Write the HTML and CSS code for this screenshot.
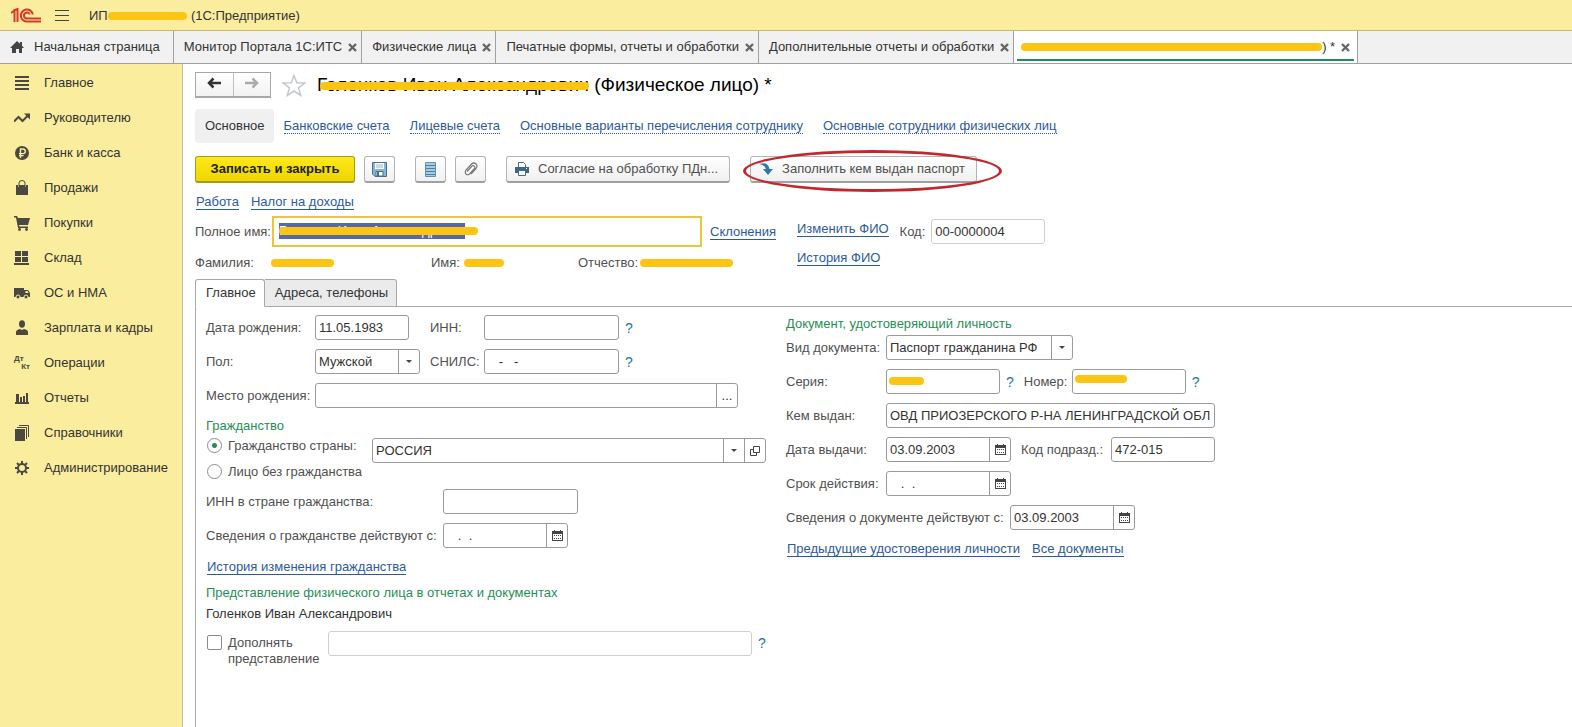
FILE: index.html
```html
<!DOCTYPE html>
<html lang="ru">
<head>
<meta charset="UTF-8">
<meta name="viewport" content="width=device-width, initial-scale=1.0">
<title>Физическое лицо (1С:Предприятие)</title>
<link rel="stylesheet" href="styles.css">
</head>
<body>

<!-- общие значки -->
<svg class="sprite" aria-hidden="true">
  <symbol id="i-cal" viewBox="0 0 11 11">
    <path d="M0 1h2V0h1v1h5V0h1v1h2v10H0z" fill="#444"/>
    <path d="M1 4h9v6H1z" fill="#fff"/>
    <path d="M2 5h1v1H2zM4 5h1v1H4zM6 5h1v1H6zM8 5h1v1H8zM2 8h1v1H2zM4 8h1v1H4zM6 8h1v1H6zM8 8h1v1H8z" fill="#444"/>
  </symbol>
  <symbol id="i-close" viewBox="0 0 9 9">
    <path d="M1 1l7 7M8 1L1 8" stroke="#666" stroke-width="2.4" fill="none"/>
  </symbol>
</svg>

<header class="topbar">
  <svg class="logo" width="31" height="16" viewBox="0 0 31 16" fill="none" stroke="#d8382c">
    <path d="M0 5L3.500 2.500V14M2.500 2.500L6.500 1V14" stroke-width="2"/>
    <path d="M21.800 6.500A6 6 0 1 0 16.500 13.500H30" stroke-width="2"/>
    <path d="M18.800 6.500A3 3 0 1 0 16.500 10.500H30" stroke-width="2"/>
  </svg>
  <button class="burger" aria-label="Меню"><span></span><span></span><span></span></button>
  <span class="app-name">ИП <span class="marker marker-org"></span> (1С:Предприятие)</span>
</header>

<nav class="tabs">
  <a href="#" class="tab tab-home">
    <svg width="16" height="14" viewBox="0 0 16 14"><path d="M8 1l3 2.800V2h2v3.700L15 8h-2v5h-3V9H7v4H3V8H1z" fill="#444"/></svg>
    Начальная страница
  </a>
  <a href="#" class="tab">Монитор Портала 1С:ИТС <svg width="9" height="9"><use href="#i-close"/></svg></a>
  <a href="#" class="tab">Физические лица <svg width="9" height="9"><use href="#i-close"/></svg></a>
  <a href="#" class="tab">Печатные формы, отчеты и обработки <svg width="9" height="9"><use href="#i-close"/></svg></a>
  <a href="#" class="tab">Дополнительные отчеты и обработки <svg width="9" height="9"><use href="#i-close"/></svg></a>
  <a href="#" class="tab active"><span class="marker marker-tab"></span><span>) *</span> <svg width="9" height="9"><use href="#i-close"/></svg></a>
</nav>

<div class="layout">
  <aside class="sidebar">
    <a href="#"><svg width="16" height="16" viewBox="0 0 16 16" fill="#4a4840"><path d="M1 1h14v2H1zM1 5h14v2H1zM1 9h14v2H1zM1 13h14v2H1z"/></svg>Главное</a>
    <a href="#"><svg width="16" height="16" viewBox="0 0 16 16" fill="none" stroke="#4a4840" stroke-width="2"><path d="M0 11.500l4.500-4.500 4 4L14 5.500"/><path d="M10 3.500h6V9.500z" fill="#4a4840" stroke="none"/></svg>Руководителю</a>
    <a href="#"><svg width="16" height="16" viewBox="0 0 16 16"><circle cx="8" cy="8" r="7" fill="#4a4840"/><path d="M6.500 13V4h2.500a2.300 2.300 0 0 1 0 4.600H5M5 10.600h4.500" stroke="#fbed9e" stroke-width="1.400" fill="none"/></svg>Банк и касса</a>
    <a href="#"><svg width="16" height="16" viewBox="0 0 16 16"><path d="M2 5h2v2h1V5h6v2h1V5h2v10H2z" fill="#4a4840"/><path d="M5 7V3a3 2.500 0 0 1 6 0v4" stroke="#4a4840" fill="none"/></svg>Продажи</a>
    <a href="#"><svg width="16" height="16" viewBox="0 0 16 16"><path d="M0 1h3l1 2h12l-2 7H5l.5 1.500H14V13H4L2 2.500H0z" fill="#4a4840"/><circle cx="5.500" cy="14.500" r="1.400" fill="#4a4840"/><circle cx="12.500" cy="14.500" r="1.400" fill="#4a4840"/></svg>Покупки</a>
    <a href="#"><svg width="16" height="16" viewBox="0 0 16 16" fill="#4a4840"><path d="M1 1h6v5H1zM8 1h6v5H8zM1 7h6v5H1zM8 7h6v5H8zM0 13h15v2H0z"/></svg>Склад</a>
    <a href="#"><svg width="16" height="16" viewBox="0 0 16 16"><path d="M0 3h10v9H0zM10 5h4l2 3v4h-6z" fill="#4a4840"/><path d="M11.500 6h2l1.200 2h-3.200z" fill="#fbed9e"/><g fill="#4a4840" stroke="#fbed9e"><circle cx="4" cy="12" r="2"/><circle cx="12" cy="12" r="2"/></g></svg>ОС и НМА</a>
    <a href="#"><svg width="16" height="16" viewBox="0 0 16 16" fill="#4a4840"><ellipse cx="8" cy="4" rx="3" ry="3.700"/><path d="M2 15v-3q0-2 4-3l2 1 2-1q4 1 4 3v3z"/></svg>Зарплата и кадры</a>
    <a href="#"><span class="dtkt"><span>Дт</span><span>Кт</span></span>Операции</a>
    <a href="#"><svg width="16" height="16" viewBox="0 0 16 16" fill="#4a4840"><path d="M2 4h3v9H2zM6 7h2v6H6zM9 6h2v7H9zM12 3h2v10h-2zM1 12h14v2H1z"/></svg>Отчеты</a>
    <a href="#"><svg width="16" height="16" viewBox="0 0 16 16"><path d="M1 4h10v12H1z" fill="#4a4840"/><path d="M3 2.500h9.500V14M5 .5h9.500V12" fill="none" stroke="#4a4840"/></svg>Справочники</a>
    <a href="#"><svg width="16" height="16" viewBox="0 0 16 16" fill="none" stroke="#4a4840"><circle cx="8" cy="8" r="4" stroke-width="2"/><path d="M8 1v3M8 12v3M1 8h3M12 8h3M3 3l2 2M11 11l2 2M3 13l2-2M11 5l2-2" stroke-width="2"/></svg>Администрирование</a>
  </aside>

  <main class="content">
    <div class="title-row">
      <div class="history">
        <button aria-label="Назад"><svg width="14" height="12" viewBox="0 0 14 12"><path d="M14 6H3" stroke="#333" stroke-width="2.500"/><path d="M6.500 1.500L2 6l4.500 4.500" fill="none" stroke="#333" stroke-width="2.500"/></svg></button>
        <button aria-label="Вперед"><svg width="14" height="12" viewBox="0 0 14 12"><path d="M0 6h11" stroke="#aaa" stroke-width="2.500"/><path d="M7.500 1.500L12 6l-4.500 4.500" fill="none" stroke="#aaa" stroke-width="2.500"/></svg></button>
      </div>
      <svg class="star" width="24" height="23" viewBox="0 0 24 23"><path d="M12 1.500l2.800 7.300 8.200.2-6.500 4.900 2.300 7.600L12 17l-6.800 4.500 2.300-7.600L1 9l8.200-.2z" fill="#fff" stroke="#c3c8ce" stroke-width="1.500"/></svg>
      <h1><span class="covered">Голенков Иван Александрович<span class="marker"></span></span> (Физическое лицо) *</h1>
    </div>

    <nav class="sections">
      <a href="#" class="current">Основное</a>
      <a href="#">Банковские счета</a>
      <a href="#">Лицевые счета</a>
      <a href="#">Основные варианты перечисления сотруднику</a>
      <a href="#">Основные сотрудники физических лиц</a>
    </nav>

    <div class="toolbar">
      <button class="btn btn-primary">Записать и закрыть</button>
      <button class="btn btn-icon btn-save" aria-label="Записать"><svg width="15" height="15" viewBox="0 0 15 15"><path d="M.5.500h14v14H3l-2.500-2.500z" fill="#8db3d3" stroke="#44708f"/><path d="M3 1h9v6H3z" fill="#fff"/><path d="M4 3h7M4 5h7" stroke="#8db3d3"/><path d="M4 9.500h7V14H4z" fill="#fff" stroke="#44708f"/><path d="M5 10h2v4H5z" fill="#44708f"/></svg></button>
      <button class="btn btn-icon" aria-label="Список"><svg width="11" height="15" viewBox="0 0 11 15"><path d="M.5.500h10v14H.5z" fill="#a9cbe2" stroke="#5f91b5"/><path d="M1 3.500h9M1 6.500h9M1 9.500h9M1 12.500h9" stroke="#4b7fa5"/></svg></button>
      <button class="btn btn-icon" aria-label="Файлы"><svg width="14" height="15" viewBox="0 0 14 15"><path d="M3 9.500l5-5.500q1.500-1 2.500.5t0 2L5.500 12q-2 1.500-3.500 0t0-4L7.500 2q2.500-2 4.500 0t0 4.500L7 12" fill="none" stroke="#777" stroke-width="1.200"/></svg></button>
      <button class="btn btn-print"><svg width="14" height="14" viewBox="0 0 14 14"><path d="M3.500 5V.500h5l2 2V5" fill="#fff" stroke="#456b88"/><path d="M0 5h14v6H0z" fill="#3f6582"/><path d="M3.500 8.500h7v5h-7z" fill="#fff" stroke="#456b88"/><path d="M11 6h1v1h-1z" fill="#fff"/></svg>Согласие на обработку ПДн...</button>
      <div class="highlighted">
        <button class="btn"><svg width="14" height="14" viewBox="0 0 14 14"><path d="M0 2q9-3 10.500 5H14l-5 6-5-6h3Q6 3 0 2z" fill="#2f78a8"/></svg>Заполнить кем выдан паспорт</button>
        <span class="ring"></span>
      </div>
    </div>

    <div class="links">
      <a href="#" class="link">Работа</a>
      <a href="#" class="link">Налог на доходы</a>
    </div>

    <div class="person">
      <div class="person-main">
        <div class="row fullname-row">
          <label for="fullname">Полное имя:</label>
          <span class="fullname covered"><input id="fullname" type="text" readonly><span class="selection">Голенков Иван Александрович</span><span class="marker"></span></span>
          <a href="#" class="link">Склонения</a>
        </div>
        <div class="row name-row">
          <span class="name-part">Фамилия: <span class="marker marker-last"></span></span>
          <span class="name-part">Имя: <span class="marker marker-first"></span></span>
          <span class="name-part">Отчество: <span class="marker marker-middle"></span></span>
        </div>
      </div>
      <div class="person-side">
        <a href="#" class="link">Изменить ФИО</a>
        <a href="#" class="link">История ФИО</a>
      </div>
      <div class="row code-row">
        <label for="code">Код:</label>
        <input id="code" class="field pale w-series" type="text" value="00-0000004">
      </div>
    </div>

    <div class="page-tabs">
      <button class="page-tab selected">Главное</button>
      <button class="page-tab">Адреса, телефоны</button>
    </div>

    <form class="panel">
      <section class="col">
        <div class="row">
          <label class="l-main" for="birth">Дата рождения:</label>
          <input id="birth" class="field w-birth" type="text" value="11.05.1983">
          <label class="l-inn" for="inn">ИНН:</label>
          <input id="inn" class="field w-inn" type="text">
          <a href="#" class="help">?</a>
        </div>
        <div class="row">
          <label class="l-main" for="sex">Пол:</label>
          <span class="group w-sex"><select id="sex"><option>Мужской</option></select><span class="arrow"></span></span>
          <label class="l-snils" for="snils">СНИЛС:</label>
          <input id="snils" class="field w-inn" type="text" value="   -   -">
          <a href="#" class="help">?</a>
        </div>
        <div class="row">
          <label class="l-main" for="place">Место рождения:</label>
          <span class="group w-place"><input id="place" type="text"><button type="button">...</button></span>
        </div>

        <h2>Гражданство</h2>
        <div class="citizenship">
          <div class="radios">
            <label><input type="radio" name="citizen" checked>Гражданство страны:</label>
            <label><input type="radio" name="citizen">Лицо без гражданства</label>
          </div>
          <span class="group w-country"><select aria-label="Страна"><option>РОССИЯ</option></select><span class="arrow"></span><button type="button" aria-label="Открыть"><svg width="10" height="10" viewBox="0 0 10 10" fill="none" stroke="#444"><path d="M3.500.500h6v6h-6z"/><path d="M3 3.500H.500v6h6V7"/></svg></button></span>
        </div>
        <div class="row">
          <label class="l-wide" for="foreign-inn">ИНН в стране гражданства:</label>
          <input id="foreign-inn" class="field w-inn" type="text">
        </div>
        <div class="row">
          <label class="l-wide" for="citizen-from">Сведения о гражданстве действуют с:</label>
          <span class="group w-date"><input id="citizen-from" type="text" value="   .  ."><button type="button" aria-label="Календарь"><svg width="11" height="11"><use href="#i-cal"/></svg></button></span>
        </div>
        <div class="links"><a href="#" class="link">История изменения гражданства</a></div>

        <h2>Представление физического лица в отчетах и документах</h2>
        <p class="represent">Голенков Иван Александрович</p>
        <div class="row extra-row">
          <label class="check"><input type="checkbox"><span>Дополнять представление</span></label>
          <input class="field pale w-extra" type="text" aria-label="Представление">
          <a href="#" class="help">?</a>
        </div>
      </section>

      <section class="col col-doc">
        <h2>Документ, удостоверяющий личность</h2>
        <div class="row">
          <label class="l-doc" for="doc">Вид документа:</label>
          <span class="group w-doc"><select id="doc"><option>Паспорт гражданина РФ</option></select><span class="arrow"></span></span>
        </div>
        <div class="row">
          <label class="l-doc" for="series">Серия:</label>
          <span class="covered series"><input id="series" class="field w-series" type="text"><span class="marker"></span></span>
          <a href="#" class="help">?</a>
          <label class="l-number" for="number">Номер:</label>
          <span class="covered number"><input id="number" class="field w-series" type="text"><span class="marker"></span></span>
          <a href="#" class="help">?</a>
        </div>
        <div class="row">
          <label class="l-doc" for="issuer">Кем выдан:</label>
          <input id="issuer" class="field w-issuer" type="text" value="ОВД ПРИОЗЕРСКОГО Р-НА ЛЕНИНГРАДСКОЙ ОБЛ">
        </div>
        <div class="row">
          <label class="l-doc" for="issued">Дата выдачи:</label>
          <span class="group w-date"><input id="issued" type="text" value="03.09.2003"><button type="button" aria-label="Календарь"><svg width="11" height="11"><use href="#i-cal"/></svg></button></span>
          <label class="l-dept" for="dept">Код подразд.:</label>
          <input id="dept" class="field w-dept" type="text" value="472-015">
        </div>
        <div class="row">
          <label class="l-doc" for="valid">Срок действия:</label>
          <span class="group w-date"><input id="valid" type="text" value="   .  ."><button type="button" aria-label="Календарь"><svg width="11" height="11"><use href="#i-cal"/></svg></button></span>
        </div>
        <div class="row">
          <label class="l-doc-from" for="doc-from">Сведения о документе действуют с:</label>
          <span class="group w-date"><input id="doc-from" type="text" value="03.09.2003"><button type="button" aria-label="Календарь"><svg width="11" height="11"><use href="#i-cal"/></svg></button></span>
        </div>
        <div class="links">
          <a href="#" class="link">Предыдущие удостоверения личности</a>
          <a href="#" class="link">Все документы</a>
        </div>
      </section>
    </form>
  </main>
</div>

</body>
</html>
```
FILE: styles.css
```css
* {
  box-sizing: border-box;
}
body {
  margin: 0;
  min-height: 100vh;
  display: flex;
  flex-direction: column;
  font-family: "Liberation Sans", Arial, sans-serif;
  font-size: 13px;
  line-height: 16px;
  color: #333;
  background: #fff;
}
input, select, button {
  font: inherit;
  color: inherit;
}
button {
  cursor: pointer;
}
a {
  color: inherit;
  text-decoration: none;
}
.sprite {
  display: none;
}

/* Верхняя панель */
.topbar {
  display: flex;
  align-items: center;
  height: 31px;
  padding: 1px 0 0 11px;
  background: #fbed9e;
  border-bottom: 1px solid #c9b56b;
}
.burger {
  display: flex;
  flex-direction: column;
  gap: 4px;
  width: 14px;
  margin: 0 20px 0 13px;
  padding: 0;
  border: none;
  background: none;
}
.burger span {
  height: 1px;
  background: #444;
}
.app-name {
  white-space: nowrap;
}

/* Желтая замазка поверх личных данных */
.marker {
  display: inline-block;
  height: 8px;
  border-radius: 4px;
  background: #fdc513;
}
.marker-org {
  width: 79px;
  margin-left: -3px;
}
.marker-tab {
  width: 301px;
}
.marker-last {
  width: 63px;
  margin-left: 14px;
}
.marker-first {
  width: 40px;
}
.marker-middle {
  width: 93px;
  margin-left: -2px;
}
.covered {
  position: relative;
  display: inline-block;
}
.covered .marker {
  position: absolute;
  left: 3px;
  right: 0;
  top: 8px;
}

/* Открытые окна */
.tabs {
  display: flex;
  height: 33px;
  background: #f2f1f2;
  border-bottom: 1px solid #a0a0a0;
}
.tab {
  display: flex;
  align-items: center;
  gap: 6px;
  padding: 0 4px 0 10px;
  border-right: 1px solid #a0a0a0;
  white-space: nowrap;
}
.tab-home {
  gap: 9px;
  padding: 0 13px 0 9px;
}
.tab.active {
  padding: 0 7px;
  background: linear-gradient(#1f8f55, #1f8f55) center bottom 2px / calc(100% - 6px) 2px no-repeat #fff;
}
.tab.active span + span {
  margin-left: -6px;
}

.layout {
  display: flex;
  flex: 1;
}
.sidebar {
  flex: none;
  width: 183px;
  padding-top: 1px;
  background: #fbed9e;
  border-right: 1px solid #c4bc95;
}
.sidebar a {
  display: flex;
  align-items: center;
  gap: 14px;
  height: 35px;
  padding-left: 14px;
}
.dtkt {
  display: flex;
  flex-direction: column;
  width: 16px;
  font-size: 8px;
  line-height: 8px;
  font-weight: bold;
  color: #4a4840;
}
.dtkt span + span {
  text-align: right;
}

.content {
  flex: 1;
  min-width: 0;
  display: flex;
  flex-direction: column;
  padding: 8px 0 0 12px;
}
.title-row {
  display: flex;
  align-items: center;
  height: 26px;
}
.history {
  display: flex;
  width: 76px;
  border: 1px solid #a8a8a8;
  border-bottom: 2px solid #a8a8a8;
}
.history button {
  flex: 1;
  height: 23px;
  padding: 0;
  border: none;
  background: linear-gradient(#fff, #f2f2f2);
}
.history button + button {
  border-left: 1px solid #c0c0c0;
}
.star {
  margin: 0 11px 0 11px;
}
h1 {
  margin: 0;
  font-size: 19px;
  line-height: 22px;
  font-weight: normal;
  color: #000;
  white-space: nowrap;
}

.sections {
  display: flex;
  align-items: center;
  gap: 20px;
  margin-top: 11px;
  color: #2c5aa0;
  white-space: nowrap;
}
.sections a {
  border-bottom: 1px dotted #2c5aa0;
  line-height: 14px;
}
.sections .current {
  margin-right: -10px;
  padding: 10px 9px 10px 10px;
  border: none;
  border-radius: 4px;
  background: #f1f0f1;
  color: #333;
}

.toolbar {
  display: flex;
  gap: 9px;
  margin-top: 13px;
}
.btn {
  display: flex;
  align-items: center;
  justify-content: center;
  gap: 9px;
  height: 27px;
  padding: 0 11px 0 8px;
  border: 1px solid #b4b4b4;
  border-bottom: 2px solid #a0a0a0;
  border-radius: 3px;
  background: linear-gradient(#fff, #f0f0f0);
  color: #505050;
  white-space: nowrap;
}
.btn-primary {
  width: 160px;
  padding: 0;
  border-color: #a89a1a;
  background: linear-gradient(#ffe81a, #eed600);
  color: #222;
  font-weight: bold;
}
.btn-icon {
  width: 31px;
  padding: 0;
}
.btn-save {
  margin-right: 11px;
}
.btn-print {
  margin: 0 11px;
}
/* Обводка важной кнопки */
.highlighted {
  position: relative;
}
.ring {
  position: absolute;
  left: -7px;
  right: -25px;
  top: -6px;
  bottom: -9px;
  border: 3px solid #c1272d;
  border-radius: 50%;
  pointer-events: none;
}

.links {
  display: flex;
  gap: 12px;
  margin-top: 11px;
  padding-left: 1px;
}
.link {
  color: #2c5aa0;
  line-height: 15px;
  border-bottom: 1px solid #2c5aa0;
  white-space: nowrap;
}

.row {
  display: flex;
  align-items: center;
  height: 25px;
  white-space: nowrap;
}
label, .name-part {
  flex: none;
  color: #505050;
}

.person {
  display: flex;
  margin-top: 6px;
}
.person-main {
  flex: none;
  width: 602px;
}
.fullname-row {
  height: 31px;
}
.fullname-row label {
  width: 77px;
}
.fullname {
  width: 430px;
  margin-right: 8px;
}
.fullname input {
  display: block;
  width: 100%;
  height: 31px;
  border: 2px solid #e9c63a;
  outline: none;
}
.selection {
  position: absolute;
  left: 7px;
  top: 7px;
  overflow: hidden;
  background: #5668a5;
  color: #fff;
}
.fullname .marker {
  left: 7px;
  right: 224px;
  top: 11px;
}
.name-row {
  height: 32px;
}
.name-part:nth-child(1) {
  width: 236px;
}
.name-part:nth-child(2) {
  width: 147px;
}
.person-side {
  display: flex;
  flex-direction: column;
  align-items: flex-start;
  gap: 13px;
  margin-top: 5px;
}
.code-row {
  gap: 6px;
  margin: 3px 0 0 11px;
}

/* Закладки формы */
.page-tabs {
  display: flex;
}
.page-tab {
  height: 28px;
  padding: 0 8px 0 10px;
  border: 1px solid #a8a8a8;
  border-left: none;
  border-radius: 0 3px 0 0;
  background: #ebebeb;
}
.page-tab.selected {
  border-left: 1px solid #a8a8a8;
  border-bottom-color: #fff;
  border-radius: 3px 3px 0 0;
  background: #fff;
}
.page-tabs::after {
  content: "";
  flex: 1;
  border-bottom: 1px solid #a8a8a8;
}
.panel {
  flex: 1;
  display: flex;
  padding: 8px 0 24px 10px;
  border-left: 1px solid #a8a8a8;
}
.col {
  display: flex;
  flex-direction: column;
  gap: 9px;
  flex: none;
  width: 580px;
}
.col-doc {
  flex: 1;
}
.col h2 {
  margin: 1px 0 0;
  font-size: 13px;
  font-weight: normal;
  color: #1f8f55;
}
.col-doc h2 {
  margin-bottom: -6px;
}
.col .links {
  margin: 2px 0 0;
}

.field, .group {
  height: 25px;
  border: 1px solid #9a9a9a;
  border-radius: 3px;
  background: #fff;
}
.field {
  padding: 0 3px;
}
.pale {
  border-color: #cfcfcf;
}
.group {
  display: flex;
  overflow: hidden;
}
.group input, .group select {
  flex: 1;
  min-width: 0;
  padding: 0 3px;
  border: none;
  background: none;
  appearance: none;
}
.group button, .arrow {
  display: flex;
  align-items: center;
  justify-content: center;
  flex: none;
  width: 21px;
  padding: 0;
  border: none;
  border-left: 1px solid #9a9a9a;
  background: none;
}
.arrow::after {
  content: "";
  border: 3px solid transparent;
  border-top-color: #444;
  border-bottom: none;
}
.help {
  margin-left: 6px;
  color: #1b75a8;
  font-size: 14px;
}

.l-main {
  width: 109px;
}
.l-inn {
  width: 54px;
  margin-left: 21px;
}
.l-snils {
  width: 54px;
  margin-left: 10px;
}
.l-wide {
  width: 237px;
}
.l-doc {
  width: 100px;
}
.l-number {
  width: 48px;
  margin-left: 10px;
}
.l-dept {
  width: 90px;
  margin-left: 10px;
}
.l-doc-from {
  width: 224px;
}
.w-birth {
  width: 94px;
}
.w-sex {
  width: 105px;
}
.w-inn {
  width: 135px;
}
.w-place {
  width: 423px;
}
.w-country {
  width: 394px;
}
.w-date {
  width: 125px;
}
.w-doc {
  width: 187px;
}
.w-series {
  width: 114px;
}
.w-issuer {
  width: 329px;
}
.w-dept {
  width: 104px;
}
.w-extra {
  width: 424px;
}
.series .marker {
  right: 76px;
}
.number .marker {
  right: 59px;
  top: 6px;
}

.citizenship {
  display: flex;
  margin-top: -5px;
}
.radios {
  display: flex;
  flex-direction: column;
  gap: 10px;
  width: 166px;
}
.radios label, .check {
  display: flex;
  gap: 6px;
}
.radios input, .check input {
  appearance: none;
  flex: none;
  width: 15px;
  height: 15px;
  margin: 0 0 0 1px;
  border: 1px solid #8c8c8c;
  background: #fff;
}
.radios input {
  border-radius: 50%;
}
.radios input:checked {
  background: radial-gradient(circle, #1f8f55 2px, #fff 3px);
}
.check {
  width: 122px;
  white-space: normal;
}
.check input {
  border-radius: 2px;
}
.represent {
  margin: -4px 0 0;
}
.extra-row {
  align-items: flex-start;
}
.extra-row .check, .extra-row .help {
  margin-top: 4px;
}
```
